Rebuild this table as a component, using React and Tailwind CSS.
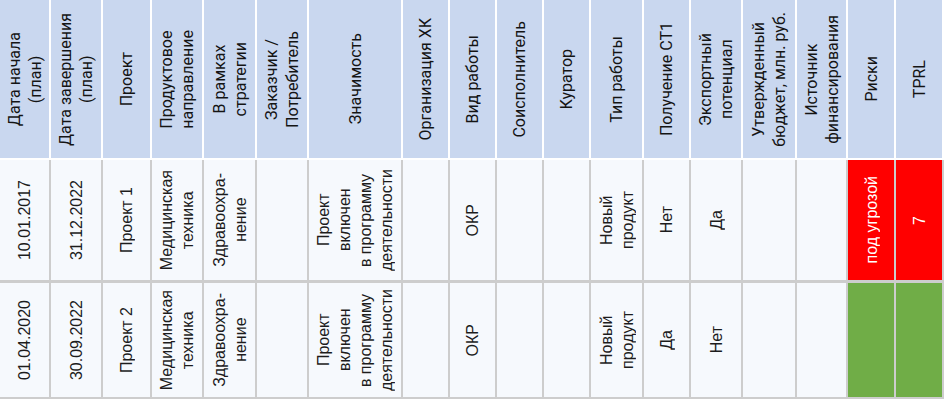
import React from 'react';

// Project register table with rotated (bottom-to-top) text

const cols =
  'grid grid-cols-[49px_50px_47px_50px_51px_50px_92px_45px_45px_45px_45px_51px_45px_50px_52px_49px_46px_46px] gap-x-[2px]';

const headers = [
  ['Дата начала', '(план)'],
  ['Дата завершения', '(план)'],
  ['Проект'],
  ['Продуктовое', 'направление'],
  ['В рамках', 'стратегии'],
  ['Заказчик /', 'Потребитель'],
  ['Значимость'],
  ['Организация ХК'],
  ['Вид работы'],
  ['Соисполнитель'],
  ['Куратор'],
  ['Тип работы'],
  ['Получение СТ1'],
  ['Экспортный', 'потенциал'],
  ['Утвержденный', 'бюджет, млн. руб.'],
  ['Источник', 'финансирования'],
  ['Риски'],
  ['TPRL'],
];

const rows = [
  {
    height: 'h-[120px]',
    cells: [
      ['10.01.2017'],
      ['31.12.2022'],
      ['Проект 1'],
      ['Медицинская', 'техника'],
      ['Здравоохра-', 'нение'],
      [],
      ['Проект', 'включен', 'в программу', 'деятельности'],
      [],
      ['ОКР'],
      [],
      [],
      ['Новый', 'продукт'],
      ['Нет'],
      ['Да'],
      [],
      [],
      { tone: 'red', lines: ['под угрозой'] },
      { tone: 'red', lines: ['7'] },
    ],
  },
  {
    height: 'h-[114px]',
    cells: [
      ['01.04.2020'],
      ['30.09.2022'],
      ['Проект 2'],
      ['Медицинская', 'техника'],
      ['Здравоохра-', 'нение'],
      [],
      ['Проект', 'включен', 'в программу', 'деятельности'],
      [],
      ['ОКР'],
      [],
      [],
      ['Новый', 'продукт'],
      ['Да'],
      ['Нет'],
      [],
      [],
      { tone: 'green', lines: [] },
      { tone: 'green', lines: [] },
    ],
  },
];

const tones = {
  red: 'bg-[#ff0000] text-white',
  green: 'bg-[#70ad47] text-white',
  plain: 'bg-[#f6f9fd] text-[#1c1c1c]',
};

function Vertical({ lines, className }) {
  return (
    <div className={`[writing-mode:vertical-rl] rotate-180 text-center whitespace-nowrap ${className}`}>
      {lines.map((l, i) => (
        <div key={i}>{l}</div>
      ))}
    </div>
  );
}

export default function App() {
  return (
    <div className="w-[944px] h-[401px] bg-white overflow-hidden">
      {/* header */}
      <div className={`${cols} h-[158px]`}>
        {headers.map((h, i) => (
          <div key={i} className="bg-[#c9d7ef] flex items-center justify-center">
            <Vertical
              lines={h}
              className="font-['Roboto',sans-serif] text-[16px] leading-[21px] text-[#141414]"
            />
          </div>
        ))}
      </div>

      {/* body */}
      <div className="mt-[2px] bg-[#cdcdcd] pb-[2px] flex flex-col gap-y-[3px]">
        {rows.map((row, r) => (
          <div key={r} className={`${cols} ${row.height}`}>
            {row.cells.map((c, i) => {
              const cell = Array.isArray(c) ? { tone: 'plain', lines: c } : c;
              return (
                <div key={i} className={`${tones[cell.tone]} flex items-center justify-center`}>
                  <Vertical
                    lines={cell.lines}
                    className="font-['Liberation_Sans',Arial,sans-serif] text-[16px] leading-[21px]"
                  />
                </div>
              );
            })}
          </div>
        ))}
      </div>
    </div>
  );
}
